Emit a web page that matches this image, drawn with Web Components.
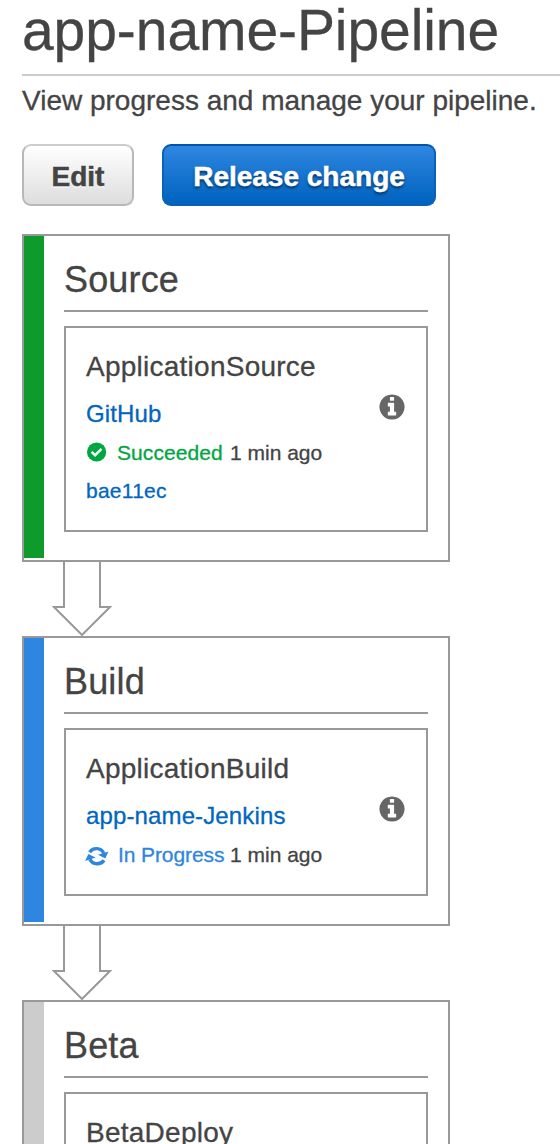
<!DOCTYPE html>
<html lang="en">
<head>
<meta charset="utf-8">
<title>app-name-Pipeline</title>
<style>
html,body{margin:0;height:1144px;overflow:hidden;background:#fff}
body{font-family:"Liberation Sans",Arial,sans-serif;color:#444;-webkit-text-stroke:.3px}
</style>
</head>
<body>
<pipeline-page>
  <span slot="title">app-name-Pipeline</span>
  <span slot="description">View progress and manage your pipeline.</span>
  <pipeline-button slot="actions">Edit</pipeline-button>
  <pipeline-button slot="actions" primary>Release change</pipeline-button>
  <pipeline-stage style="--status:#0f9b2b">
    <span slot="name">Source</span>
    <stage-action>
      <span slot="name">ApplicationSource</span>
      <span slot="provider">GitHub</span>
      <action-status slot="status" state="succeeded"><span>Succeeded</span><span slot="time">1 min ago</span></action-status>
      <span slot="revision">bae11ec</span>
    </stage-action>
  </pipeline-stage>
  <stage-arrow></stage-arrow>
  <pipeline-stage style="--status:#2e86e0">
    <span slot="name">Build</span>
    <stage-action>
      <span slot="name">ApplicationBuild</span>
      <span slot="provider">app-name-Jenkins</span>
      <action-status slot="status" state="progress"><span>In Progress</span><span slot="time">1 min ago</span></action-status>
    </stage-action>
  </pipeline-stage>
  <stage-arrow></stage-arrow>
  <pipeline-stage style="--status:#ccc">
    <span slot="name">Beta</span>
    <stage-action><span slot="name">BetaDeploy</span></stage-action>
  </pipeline-stage>
</pipeline-page>
<script>
const define = (name, html, setup) => customElements.define(name, class extends HTMLElement {
  constructor() {
    super();
    this.attachShadow({ mode: 'open' }).innerHTML = html;
  }
  connectedCallback() { if (setup) setup(this); }
});

define('pipeline-page', `
<style>
:host{display:block;padding-left:22px}
h1{margin:0;height:74px;font-size:57px;line-height:60px;font-weight:400;letter-spacing:-.08px;white-space:nowrap}
p{margin:0;border-top:2px solid #ccc;font-size:28px;line-height:49px;white-space:nowrap}
.actions{display:flex;gap:28px;margin:19px 0 28px}
</style>
<h1><slot name="title"></slot></h1>
<p><slot name="description"></slot></p>
<div class="actions"><slot name="actions"></slot></div>
<slot></slot>`);

define('pipeline-button', `
<style>
:host{display:block}
button{display:block;box-sizing:border-box;width:112px;height:62px;padding:0;margin:0;border:2px solid #b8b8b8;border-top-color:#ccc;border-radius:9px;background:linear-gradient(#fff,#ddd);font:bold 28px/61px "Liberation Sans",Arial,sans-serif;color:#444;-webkit-text-stroke:.5px;text-shadow:0 2px 1px rgba(255,255,255,.5);white-space:nowrap}
span{display:block;height:58px}
:host([primary]) button{width:274px;border-color:#0a62b8;border-top-color:#0056ac;background:linear-gradient(#2e86e0,#0063be);color:#fff;text-shadow:0 2px 3px rgba(0,30,70,.85)}
</style>
<button type="button"><span><slot></slot></span></button>`);

define('pipeline-stage', `
<style>
:host{display:flex;box-sizing:border-box;width:428px;border:2px solid #999;background:#fff}
.bar{width:20px;margin-bottom:2px;background:var(--status);flex:none}
.body{width:364px;margin-left:20px;padding-bottom:28px}
h2{margin:0 0 14px;padding-top:13px;border-bottom:2px solid #999;font-size:36px;line-height:61px;font-weight:400;letter-spacing:.15px}
</style>
<div class="bar"></div>
<div class="body"><h2><slot name="name"></slot></h2><slot></slot></div>`);

define('stage-action', `
<style>
:host{display:flex;justify-content:space-between;border:2px solid #999;padding:14px 21px 23px 20px;white-space:nowrap}
.name{font-size:28px;line-height:49px;letter-spacing:.25px}
.provider{font-size:24px;line-height:45px;color:#0066c0;letter-spacing:.13px}
.revision{color:#0066c0;font-size:21px;letter-spacing:.25px}
::slotted([slot=revision]){display:block;height:38px;line-height:43px}
svg{flex:none;width:26px;height:26px;margin-top:52px;fill:#666}
</style>
<div>
  <div class="name"><slot name="name"></slot></div>
  <div class="provider"><slot name="provider"></slot></div>
  <slot name="status"></slot>
  <div class="revision"><slot name="revision"></slot></div>
</div>
<svg viewBox="103 103 1586 1586"><path d="M1152 1376v-160q0-14-9-23t-23-9h-96v-512q0-14-9-23t-23-9h-320q-14 0-23 9t-9 23v160q0 14 9 23t23 9h96v320h-96q-14 0-23 9t-9 23v160q0 14 9 23t23 9h448q14 0 23-9t9-23zm-128-896v-160q0-14-9-23t-23-9h-192q-14 0-23 9t-9 23v160q0 14 9 23t23 9h192q14 0 23-9t9-23zm640 416q0 209-103 385.5t-279.5 279.5-385.5 103-385.5-103-279.5-279.5-103-385.5 103-385.5 279.5-279.5 385.5-103 385.5 103 279.5 279.5 103 385.5z"/></svg>`);

const syncHalf = '<path d="M4.6 8.4A8 7.6 0 0 1 18.7 9.4" fill="none" stroke="currentColor" stroke-width="3.4"/><path d="M23.4 7.6L20.3 14.6 13 11z" fill="currentColor"/>';
const icons = {
  succeeded: '<circle cx="11.6" cy="11" r="9.6" fill="currentColor"/><path d="M6.6 10.8l3.5 3.4 6.4-6.3" fill="none" stroke="#fff" stroke-width="2.4"/>',
  progress: `<g transform="translate(0 .8)">${syncHalf}<g transform="rotate(180 11.8 12.4)">${syncHalf}</g></g>`
};
define('action-status', `
<style>
:host{display:flex;height:33px;font-size:21px;line-height:33px;--c:#00a63f}
:host([state=progress]){--c:#2e86e0}
svg{flex:none;width:24px;height:24px;margin:5px 8px 0 -1px;color:var(--c)}
:host([state=progress]) svg{margin-right:9px}
.label{color:var(--c);width:113px;letter-spacing:.07px}
:host([state=progress]) .label{width:112px;letter-spacing:-.1px}
.time{letter-spacing:0}
</style>
<svg viewBox="0 0 24 24"></svg>
<div class="label"><slot></slot></div>
<div class="time"><slot name="time"></slot></div>`,
  el => { el.shadowRoot.querySelector('svg').innerHTML = icons[el.getAttribute('state')] || ''; });

define('stage-arrow', `
<style>
:host{display:block;height:74px;padding-left:30px}
svg{display:block}
</style>
<svg width="60" height="74" viewBox="0 0 60 74" fill="none" stroke="#999" stroke-width="2"><path d="M12 0v45H2L30 73 58 45H48V0"/></svg>`);
</script>
</body>
</html>
